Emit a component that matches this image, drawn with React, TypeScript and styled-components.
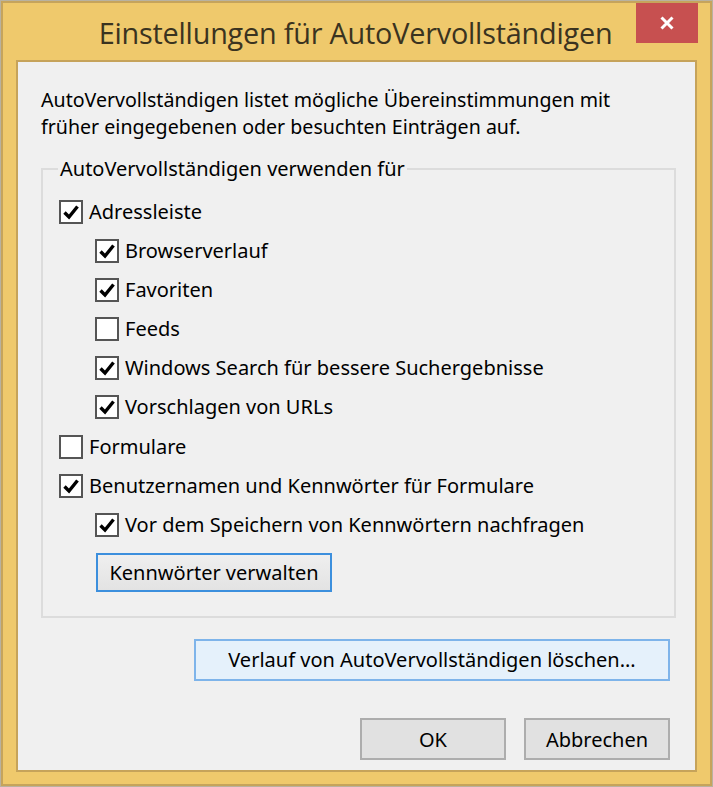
import React from 'react';
import styled, { createGlobalStyle } from 'styled-components';

const GlobalStyle = createGlobalStyle`
  html, body {
    margin: 0;
    padding: 0;
    background: #b9b2a0;
  }
  body {
    font-family: 'Noto Sans', 'Liberation Sans', sans-serif;
  }
`;

type Option = { label: string; checked: boolean; level: number };

const options: Option[] = [
  { label: 'Adressleiste', checked: true, level: 0 },
  { label: 'Browserverlauf', checked: true, level: 1 },
  { label: 'Favoriten', checked: true, level: 1 },
  { label: 'Feeds', checked: false, level: 1 },
  { label: 'Windows Search für bessere Suchergebnisse', checked: true, level: 1 },
  { label: 'Vorschlagen von URLs', checked: true, level: 1 },
  { label: 'Formulare', checked: false, level: 0 },
  { label: 'Benutzernamen und Kennwörter für Formulare', checked: true, level: 0 },
  { label: 'Vor dem Speichern von Kennwörtern nachfragen', checked: true, level: 1 },
];

const CheckMark = () => (
  <svg width="20" height="20" viewBox="0 0 20 20">
    <path d="M3.5 10.5 L8 15 L16.5 4.5" fill="none" stroke="#000" strokeWidth="3.4" />
  </svg>
);

const App = () => {
  return (
    <>
      <GlobalStyle />
      <Window>
        <TitleBar>
          <Title>Einstellungen für AutoVervollständigen</Title>
          <CloseButton>
            <svg width="16" height="16" viewBox="0 0 16 16">
              <path d="M2.5 2.5 L13.5 13.5 M13.5 2.5 L2.5 13.5" stroke="#fff" strokeWidth="3" />
            </svg>
          </CloseButton>
        </TitleBar>
        <Client>
          <Description>
            AutoVervollständigen listet mögliche Übereinstimmungen mit
            <br />
            früher eingegebenen oder besuchten Einträgen auf.
          </Description>
          <GroupBox>
            <Legend>AutoVervollständigen verwenden für</Legend>
            <OptionList>
              {options.map((o) => (
                <Row key={o.label} $level={o.level}>
                  <Box>{o.checked && <CheckMark />}</Box>
                  <Label>{o.label}</Label>
                </Row>
              ))}
            </OptionList>
            <ManageButton>Kennwörter verwalten</ManageButton>
          </GroupBox>
          <ClearRow>
            <ClearButton>Verlauf von AutoVervollständigen löschen...</ClearButton>
          </ClearRow>
          <Footer>
            <DialogButton>OK</DialogButton>
            <DialogButton>Abbrechen</DialogButton>
          </Footer>
        </Client>
      </Window>
    </>
  );
};
export default App;

const Window = styled.div`
  width: 711px;
  height: 785px;
  margin: 1px 0 0 1px;
  box-sizing: border-box;
  border: 2px solid #c6a45c;
  background: #efc96c;
  display: flex;
  flex-direction: column;
  padding: 0 13px 12px 13px;
`;

const TitleBar = styled.div`
  height: 57px;
  flex-shrink: 0;
  display: flex;
  align-items: center;
  justify-content: center;
  position: relative;
`;

const Title = styled.div`
  font-family: 'Open Sans', 'Noto Sans', sans-serif;
  font-size: 28.8px;
  font-weight: 400;
  color: #3a3320;
  letter-spacing: -0.2px;
  margin-top: 2px;
  margin-left: -2px;
`;

const CloseButton = styled.div`
  position: absolute;
  top: 0;
  right: -1px;
  width: 62px;
  height: 40px;
  background: #c75050;
  display: flex;
  align-items: center;
  justify-content: center;
`;

const Client = styled.div`
  flex: 1;
  background: #f0f0f0;
  border: 2px solid #c6a35a;
  display: flex;
  flex-direction: column;
  padding: 24px 19px 10px 23px;
  color: #000;
  font-size: 20px;
`;

const Description = styled.div`
  font-size: 19.6px;
  line-height: 27px;
  margin-bottom: 15px;
`;

const GroupBox = styled.fieldset`
  margin: 0;
  border: 2px solid #dcdcdc;
  padding: 18px 16px 24px 16px;
  min-width: 0;
  display: flex;
  flex-direction: column;
  align-items: flex-start;
`;

const Legend = styled.legend`
  margin-left: -1px;
  padding: 0 2px;
  line-height: 27px;
`;

const OptionList = styled.div`
  display: flex;
  flex-direction: column;
  gap: 15.1px;
`;

const Row = styled.div<{ $level: number }>`
  display: flex;
  align-items: center;
  gap: 6px;
  height: 24px;
  padding-left: ${(p) => p.$level * 36}px;
`;

const Box = styled.div`
  width: 24px;
  height: 24px;
  box-sizing: border-box;
  border: 2px solid #555;
  background: #fff;
  display: flex;
  align-items: center;
  justify-content: center;
  flex-shrink: 0;
`;

const Label = styled.span`
  line-height: 24px;
  white-space: nowrap;
`;

const ManageButton = styled.button`
  margin: 16px 0 0 37px;
  width: 236px;
  height: 39px;
  border: 2px solid #3c8fdd;
  background: linear-gradient(#efefef, #e3e3e3);
  font: inherit;
  color: #000;
  padding: 0;
`;

const ClearRow = styled.div`
  display: flex;
  justify-content: flex-end;
  margin-top: 21px;
  padding-right: 6px;
`;

const ClearButton = styled.button`
  width: 476px;
  height: 42px;
  border: 2px solid #7eb4ea;
  background: #e5f1fb;
  font: inherit;
  color: #000;
  padding: 0;
`;

const Footer = styled.div`
  display: flex;
  justify-content: flex-end;
  gap: 18px;
  margin-top: auto;
  padding-right: 6px;
`;

const DialogButton = styled.button`
  width: 146px;
  height: 42px;
  border: 2px solid #adadad;
  background: #e1e1e1;
  font: inherit;
  color: #000;
  padding: 0;
`;
